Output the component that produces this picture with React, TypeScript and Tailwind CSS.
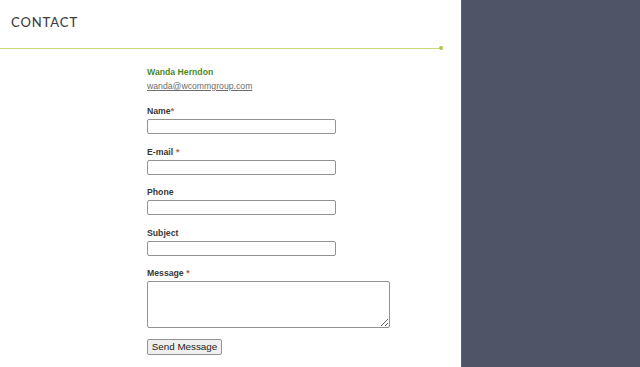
import React from 'react'

const fields = [
  { label: 'Name', req: 'tight' },
  { label: 'E-mail', req: 'space' },
  { label: 'Phone', req: '' },
  { label: 'Subject', req: '' },
]

export default function App() {
  return (
    <div className="flex h-[367px] w-[640px] overflow-hidden bg-white" style={{ fontFamily: '"Liberation Sans", Arial, sans-serif' }}>
      <div className="w-[461px] shrink-0">
        <div className="h-[46px] pl-[11px] pt-[13px]">
          <h1 className="text-[13px] font-medium uppercase tracking-[0.07em] text-[#3f3f3f]" style={{ fontFamily: 'Lato, sans-serif' }}>
            Contact
          </h1>
        </div>
        <div className="flex items-center pr-[18px]">
          <div className="h-px flex-1 bg-[#c9d97a]" />
          <div className="h-[4px] w-[4px] rounded-full bg-[#aec34a]" />
        </div>
        <div className="pl-[147px] pt-[17px]">
          <p className="text-[8.7px] font-bold leading-[11px] text-[#4c8a1f]">Wanda Herndon</p>
          <a className="mt-[3px] block text-[8.7px] leading-[11px] text-[#6e6e6e] underline">wanda@wcommgroup.com</a>
          <form className="mt-[14px] flex flex-col gap-[12.5px]">
            {fields.map((f) => (
              <div key={f.label} className="flex flex-col">
                <label className="text-[8.7px] font-bold leading-[11px] text-[#383838]">
                  {f.label}
                  {f.req === 'tight' && <span className="text-[#b0643a]">*</span>}
                  {f.req === 'space' && <span className="ml-[3px] text-[#b0643a]">*</span>}
                </label>
                <input className="mt-[2px] h-[15px] w-[189px] rounded-[2px] border border-[#939393] bg-white" />
              </div>
            ))}
            <div className="flex flex-col">
              <label className="text-[8.7px] font-bold leading-[11px] text-[#383838]">
                Message <span className="text-[#b0643a]">*</span>
              </label>
              <textarea className="mt-[2px] h-[47px] w-[243px] resize rounded-[2px] border border-[#939393] bg-white" />
            </div>
          </form>
          <button className="mt-[11px] h-[16px] w-[75px] rounded-[2px] border border-[#939393] bg-[#efefef] text-[9.8px] leading-[14px] text-[#222]">
            Send Message
          </button>
        </div>
      </div>
      <div className="flex-1 border-l border-[#5c6475] bg-[#4d5566]" />
    </div>
  )
}
